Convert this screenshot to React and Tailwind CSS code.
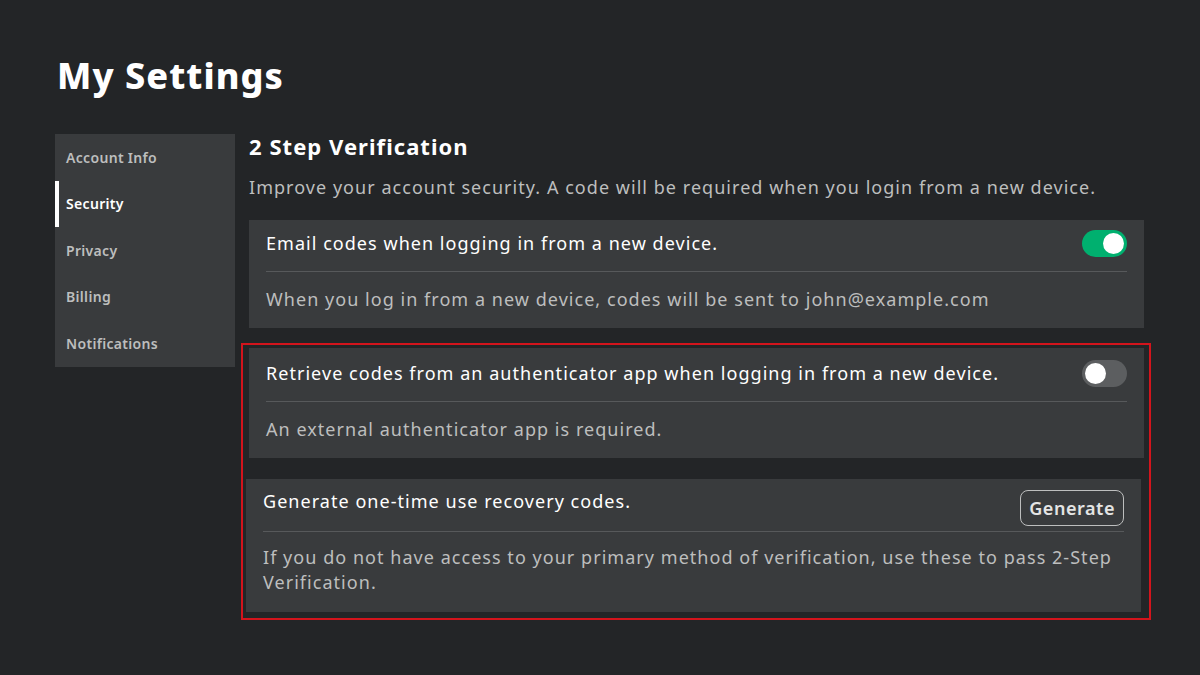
import React from 'react';

const font = { fontFamily: '"Noto Sans", "Open Sans", sans-serif' };

const navItems = ['Account Info', 'Security', 'Privacy', 'Billing', 'Notifications'];

const Toggle = ({ on }) => (
  <div
    className={`w-[45px] h-[27px] rounded-full p-[3px] flex items-center ${
      on ? 'bg-[#00b06f] justify-end' : 'bg-[#5c5e60] justify-start'
    }`}
  >
    <div className="w-[21px] h-[21px] rounded-full bg-white" />
  </div>
);

// header height differs slightly between the two toggle cards in the design
const SettingCard = ({ title, body, action, headerClass, className = '' }) => (
  <div className={`bg-[#393b3d] px-[17px] ${className}`}>
    <div className={`flex items-center justify-between border-b border-[#57595b] ${headerClass}`}>
      <span className="text-[18px] text-white">{title}</span>
      {action}
    </div>
    <div className="pt-[15px] pb-[16px] text-[18px] leading-[25px] text-[#bdbebe]">{body}</div>
  </div>
);

export default function App() {
  return (
    <div className="min-h-screen w-full bg-[#232527] text-white tracking-[0.065em]" style={font}>
      <div className="pl-[55px] pt-[54px]">
        <h1 className="text-[36px] font-extrabold leading-[44px] pl-[2px]">My Settings</h1>
        <div className="flex mt-[36px]">
          <nav className="w-[180px] bg-[#393b3d] h-[233px] flex flex-col shrink-0 tracking-[0.02em]">
            {navItems.map((item) => {
              const active = item === 'Security';
              return (
                <div
                  key={item}
                  className={`h-[46.5px] flex items-center pl-[7px] text-[14px] font-semibold border-l-4 ${
                    active ? 'border-white text-white' : 'border-transparent text-[#bdbebe]'
                  }`}
                >
                  {item}
                </div>
              );
            })}
          </nav>
          <main className="ml-[14px] w-[895px]">
            <h2 className="text-[22px] font-bold leading-[26px] -mt-[1px]">2 Step Verification</h2>
            <p className="text-[18px] text-[#bdbebe] mt-[16px] leading-[24px]">
              Improve your account security. A code will be required when you login from a new device.
            </p>
            <SettingCard
              className="mt-[21px]"
              headerClass="h-[52px] pb-[4px]"
              title="Email codes when logging in from a new device."
              body="When you log in from a new device, codes will be sent to john@example.com"
              action={<Toggle on />}
            />
            <div className="-ml-[8px] mt-[15px] w-[910px] border-2 border-[#d3141c] pt-[3px] pb-[6px] pl-[6px]">
              <SettingCard
                className="w-[895px]"
                headerClass="h-[54px] pb-[3px]"
                title="Retrieve codes from an authenticator app when logging in from a new device."
                body="An external authenticator app is required."
                action={<Toggle />}
              />
              <div className="bg-[#393b3d] px-[17px] mt-[21px] w-[895px] -ml-[3px]">
                <div className="h-[53px] flex items-start justify-between border-b border-[#57595b]">
                  <span className="text-[18px] text-white mt-[9px]">Generate one-time use recovery codes.</span>
                  <button className="mt-[11px] h-[36px] px-[8px] rounded-[8px] border border-[#bdbebe] text-[18px] font-semibold text-[#e4e4e4] tracking-[0.03em]">
                    Generate
                  </button>
                </div>
                <div className="pt-[13px] pb-[17px] text-[18px] leading-[25px] text-[#bdbebe]">
                  If you do not have access to your primary method of verification, use these to pass 2-Step Verification.
                </div>
              </div>
            </div>
          </main>
        </div>
      </div>
    </div>
  );
}
